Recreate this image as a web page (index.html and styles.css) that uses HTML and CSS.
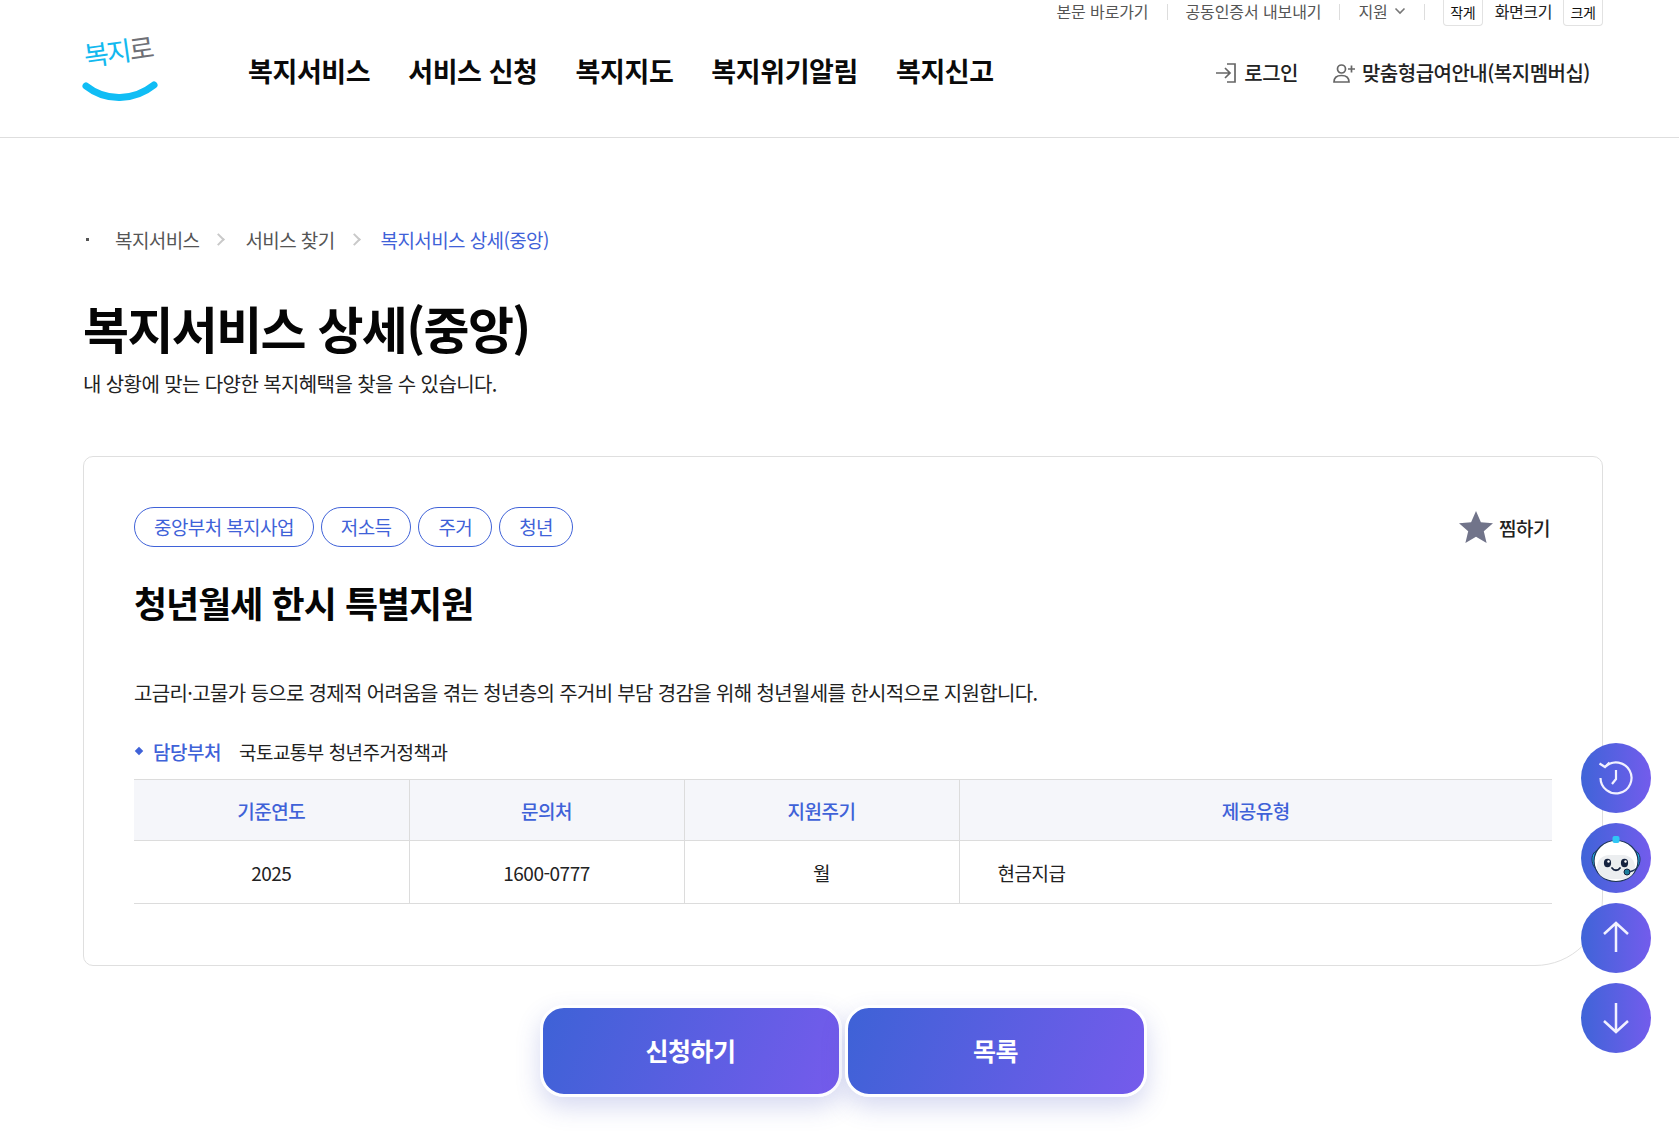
FILE: index.html
```html
<!DOCTYPE html>
<html lang="ko">
<head>
<meta charset="utf-8">
<title>복지서비스 상세(중앙)</title>
<link rel="stylesheet" href="styles.css">
</head>
<body>
<header class="site-header">
  <div class="util">
    <a class="util-link">본문 바로가기</a><i class="util-sep"></i>
    <a class="util-link">공동인증서 내보내기</a><i class="util-sep"></i>
    <a class="util-link util-lang">지원
      <svg class="chev" viewBox="0 0 12 8" width="12" height="8"><path d="M1.5 1.5 6 6l4.5-4.5" fill="none" stroke="#777" stroke-width="1.6"/></svg>
    </a><i class="util-sep"></i>
    <span class="zoom-btn">작게</span><span class="zoom-label">화면크기</span><span class="zoom-btn">크게</span>
  </div>
  <div class="main-bar">
    <a class="logo">
      <span class="logo-text"><span class="logo-blue">복지</span><span class="logo-gray">로</span></span>
      <svg class="logo-smile" viewBox="0 0 76 22" width="76" height="22"><path d="M4 5C24 21 52 20 72 4" fill="none" stroke="#10bdf5" stroke-width="7" stroke-linecap="round"/></svg>
    </a>
    <nav class="gnb">
      <a>복지서비스</a><a>서비스 신청</a><a>복지지도</a><a>복지위기알림</a><a>복지신고</a>
    </nav>
    <div class="member">
      <a class="member-link login">
        <svg viewBox="0 0 24 24" width="24" height="24"><path d="M13 3h8v18h-8M2 12h14M11 7l5 5-5 5" fill="none" stroke="#666" stroke-width="1.7"/></svg>
        로그인</a>
      <a class="member-link">
        <svg viewBox="0 0 24 24" width="24" height="24"><circle cx="9.500" cy="8" r="4" fill="none" stroke="#666" stroke-width="1.700"/><path d="M2 21c0-4.500 3-6.500 7.500-6.500S17 16.500 17 21z" fill="none" stroke="#666" stroke-width="1.700"/><path d="M16 8h7M19.500 4.500v7" stroke="#666" stroke-width="1.700"/></svg>
        맞춤형급여안내(복지멤버십)</a>
    </div>
  </div>
</header>

<main class="content">
  <ol class="crumbs">
    <li class="crumb">복지서비스</li>
    <li class="crumb-sep"></li>
    <li class="crumb">서비스 찾기</li>
    <li class="crumb-sep"></li>
    <li class="crumb crumb-current">복지서비스 상세(중앙)</li>
  </ol>
  <h1 class="page-title">복지서비스 상세(중앙)</h1>
  <p class="page-sub">내 상황에 맞는 다양한 복지혜택을 찾을 수 있습니다.</p>

  <section class="card">
    <div class="card-top">
      <ul class="tags">
        <li class="tag">중앙부처 복지사업</li>
        <li class="tag">저소득</li>
        <li class="tag">주거</li>
        <li class="tag">청년</li>
      </ul>
      <button class="fav">
        <svg viewBox="0 0 34 32" width="34" height="32"><path d="M17 0l4.900 11.300 12.100 1-9.200 7.900 2.800 11.800L17 25.700 6.400 32l2.800-11.800L0 12.300l12.100-1z" fill="#71748a"/></svg>
        찜하기
      </button>
    </div>
    <h2 class="svc-title">청년월세 한시 특별지원</h2>
    <p class="svc-desc">고금리·고물가 등으로 경제적 어려움을 겪는 청년층의 주거비 부담 경감을 위해 청년월세를 한시적으로 지원합니다.</p>
    <div class="dept">
      <i class="dept-bullet"></i>
      <span class="dept-label">담당부처</span>
      <span class="dept-value">국토교통부 청년주거정책과</span>
    </div>
    <table class="info">
      <thead>
        <tr><th class="col">기준연도</th><th class="col">문의처</th><th class="col">지원주기</th><th>제공유형</th></tr>
      </thead>
      <tbody>
        <tr><td>2025</td><td>1600-0777</td><td>월</td><td class="left">현금지급</td></tr>
      </tbody>
    </table>
  </section>

  <div class="actions">
    <a class="btn">신청하기</a>
    <a class="btn">목록</a>
  </div>
</main>

<aside class="floaters">
  <a class="fab">
    <svg viewBox="0 0 40 40" width="40" height="40" fill="none" stroke="#f2f1ff" stroke-width="2.200"><path d="M9.500 8.500A15.500 15.500 0 1 1 4.500 20"/><path d="M3.500 5.500l5.500 3.500 4.500-4.500" stroke-width="2.200"/><path d="M20 12v9l-4 5"/></svg>
  </a>
  <a class="fab">
    <svg viewBox="0 0 66 66" width="66" height="66">
      <path d="M9 34c0-5 3-8 6-9l2 20c-5 0-8-5-8-11zM57 34c0-5-3-8-6-9l-2 20c5 0 8-5 8-11z" fill="#23b5f0" stroke="#1d3557" stroke-width="1"/>
      <ellipse cx="33" cy="36" rx="22" ry="20.500" fill="#fff" stroke="#1d3557" stroke-width="1.200"/>
      <rect x="14" y="30" width="38" height="24" rx="12" fill="#eceef0"/>
      <rect x="29.500" y="11" width="7" height="7" rx="2" fill="#2fc6f5"/>
      <ellipse cx="24.500" cy="38" rx="3.600" ry="4.200" fill="#16233f"/>
      <ellipse cx="41.500" cy="38" rx="3.600" ry="4.200" fill="#16233f"/>
      <circle cx="25.500" cy="36.500" r="1.200" fill="#fff"/><circle cx="42.500" cy="36.500" r="1.200" fill="#fff"/>
      <path d="M29 43c2 3 6 3 8 0" fill="none" stroke="#16233f" stroke-width="1.800" stroke-linecap="round"/>
      <path d="M43 47c4 0 8-1 11-4" fill="none" stroke="#1d3557" stroke-width="1.400"/>
      <circle cx="44" cy="47" r="3" fill="#1b7f9c" stroke="#16233f"/>
    </svg>
  </a>
  <a class="fab">
    <svg viewBox="0 0 40 40" width="40" height="40" fill="none" stroke="#f2f1ff" stroke-width="2.500"><path d="M20 34V5M8 16 20 5l12 11"/></svg>
  </a>
  <a class="fab">
    <svg viewBox="0 0 40 40" width="40" height="40" fill="none" stroke="#f2f1ff" stroke-width="2.500"><path d="M20 5v29M8 23l12 11 12-11"/></svg>
  </a>
</aside>
</body>
</html>
```
FILE: styles.css
```css
* { box-sizing: border-box; }
html, body { margin: 0; padding: 0; background: #fff; }
body {
  height: 1145px;
  overflow: hidden;
  font-family: "Noto Sans CJK KR", "Noto Sans", sans-serif;
  color: #111;
  position: relative;
}
ul, ol { list-style: none; margin: 0; padding: 0; }
a { color: inherit; text-decoration: none; }

.site-header { height: 138px; border-bottom: 1px solid #dedede; padding: 0 76px 0 83px; }

.util {
  height: 26px;
  display: flex;
  justify-content: flex-end;
  align-items: flex-start;
  font-size: 16px;
  line-height: 22px;
  color: #555;
}
.util-link { display: flex; align-items: center; gap: 6px; letter-spacing: -0.1px; }
.util-sep { width: 1px; height: 16px; margin: 4px 18px 0; background: #ddd; }
.zoom-btn {
  width: 40px;
  height: 26px;
  border: 1px solid #e2e2e2;
  border-top: 0;
  border-radius: 0 0 4px 4px;
  font-size: 14px;
  line-height: 24px;
  text-align: center;
  color: #111;
  letter-spacing: -0.5px;
}
.zoom-label { margin: 0 11px 0 12px; color: #222; letter-spacing: -0.4px; }

.main-bar { display: flex; align-items: flex-start; }
.logo { width: 165px; height: 80px; margin-top: 8px; display: block; position: relative; }
.logo-text { display: block; font-size: 27px; line-height: 44px; letter-spacing: -2px; transform: rotate(-8deg); transform-origin: left bottom; padding-left: 4px; }
.logo-blue { color: #12b9ef; }
.logo-gray { color: #6f7076; }
.logo-smile { display: block; margin-top: 3px; margin-left: -1px; }

.gnb { display: flex; gap: 38px; font-size: 27px; font-weight: 700; line-height: 40px; color: #0a0a0a; margin-top: 25px; letter-spacing: -0.4px; }
.member { margin-left: auto; display: flex; gap: 34px; margin-top: 33px; padding-right: 13px; font-size: 20px; line-height: 28px; font-weight: 500; color: #222; }
.member-link { display: flex; align-items: center; gap: 6px; letter-spacing: -0.5px; }

.content { padding: 0 76px 0 83px; }

.crumbs { display: flex; align-items: center; margin-top: 81px; height: 40px; font-size: 19px; color: #555; letter-spacing: -0.6px; padding-left: 32px; position: relative; font-weight: 400; }
.crumbs::before { content: ""; position: absolute; left: 3px; top: 19px; width: 3px; height: 3px; background: #555; }
.crumb-current { color: #3f62d8; }
.crumb-sep { width: 9px; height: 9px; margin: 0 22px 0 15px; border-top: 2px solid #c9c9c9; border-right: 2px solid #c9c9c9; transform: rotate(45deg); }

.page-title { margin: 33px 0 0; font-size: 50px; line-height: 70px; font-weight: 700; color: #050505; letter-spacing: -1.6px; }
.page-sub { margin: 6px 0 0; font-size: 20px; line-height: 32px; color: #222; letter-spacing: -0.6px; }

.card {
  margin-top: 56px;
  height: 510px;
  border: 1px solid #dfdfdf;
  border-radius: 10px 10px 68px 10px;
  padding: 50px 50px 0 50px;
}
.card-top { display: flex; justify-content: space-between; align-items: center; }
.tags { display: flex; gap: 7px; }
.tag {
  height: 40px;
  padding: 0 19px;
  border: 1px solid #3f62d8;
  border-radius: 20px;
  font-size: 19px;
  line-height: 38px;
  color: #3f62d8;
  letter-spacing: -0.6px;
}
.fav { display: flex; align-items: center; gap: 6px; border: 0; background: none; padding: 0 2px 0 0; font: inherit; font-size: 19px; font-weight: 500; color: #222; letter-spacing: -0.5px; }

.svc-title { margin: 29px 0 0; font-size: 36px; line-height: 52px; font-weight: 700; color: #050505; letter-spacing: -1px; }
.svc-desc { margin: 49px 0 0; font-size: 20px; line-height: 32px; color: #222; letter-spacing: -0.65px; }

.dept { display: flex; align-items: center; margin-top: 28px; height: 28px; font-size: 19px; letter-spacing: -0.5px; }
.dept-bullet { width: 6px; height: 6px; margin: 0 11px 0 2px; background: #3f62d8; transform: rotate(45deg); }
.dept-label { color: #3f62d8; font-weight: 500; margin-right: 18px; }
.dept-value { color: #222; }

.info { width: 100%; margin-top: 14px; border-collapse: collapse; table-layout: fixed; font-size: 19px; letter-spacing: -0.5px; }
.info th, .info td { text-align: center; font-weight: 400; border-top: 1px solid #dcdcdc; border-bottom: 1px solid #dcdcdc; border-right: 1px solid #dcdcdc; }
.info th:last-child, .info td:last-child { border-right: 0; }
.info th { height: 61px; background: #f5f6fa; color: #3f62d8; font-weight: 500; }
.info td { height: 63px; color: #222; }
.info .col { width: 275px; }
.info td.left { text-align: left; padding-left: 38px; }

.actions { display: flex; justify-content: center; gap: 3px; margin-top: 39px; padding-left: 0; }
.btn {
  width: 302px;
  height: 92px;
  border: 3px solid #fff;
  border-radius: 24px;
  background: linear-gradient(110deg, #3d62d6, #765bec);
  background-origin: border-box;
  box-shadow: 0 10px 24px rgba(70, 80, 190, 0.22);
  color: #fff;
  font-size: 25px;
  font-weight: 700;
  line-height: 84px;
  text-align: center;
  letter-spacing: -0.5px;
}

.floaters { position: absolute; left: 1581px; top: 743px; display: flex; flex-direction: column; gap: 10px; }
.fab {
  width: 70px;
  height: 70px;
  border-radius: 50%;
  background: linear-gradient(90deg, #3f64d8, #735cec);
  display: flex;
  align-items: center;
  justify-content: center;
}
```
